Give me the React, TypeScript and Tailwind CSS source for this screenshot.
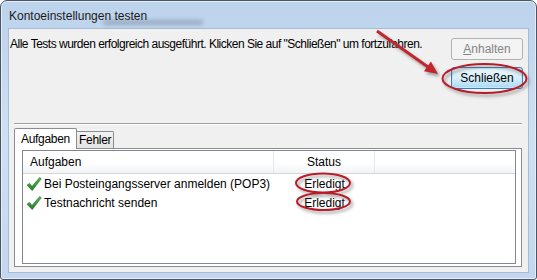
import React from "react";

const CheckIcon = () => (
  <svg width="16" height="16" viewBox="0 0 16 16" className="shrink-0">
    <defs>
      <linearGradient id="chk" x1="0" y1="0" x2="0" y2="1">
        <stop offset="0" stopColor="#5cc15c" />
        <stop offset="1" stopColor="#1f7d1f" />
      </linearGradient>
    </defs>
    <path
      d="M1 9.2 L3.6 7.4 L6 10.6 L13.6 1.6 L15.2 2.8 L6.2 14.6 Z"
      fill="url(#chk)"
      stroke="#17611a"
      strokeWidth="0.6"
      strokeLinejoin="round"
    />
  </svg>
);

const Annotations = () => (
  <svg className="absolute inset-0 pointer-events-none" width="537" height="280">
    <defs>
      <filter id="shadow" x="-20%" y="-20%" width="140%" height="160%">
        <feDropShadow dx="2" dy="2.5" stdDeviation="1.5" floodColor="#555" floodOpacity="0.55" />
      </filter>
    </defs>
    <g filter="url(#shadow)" fill="none" stroke="#b81f2a" strokeWidth="2">
      <ellipse cx="484.5" cy="78.5" rx="42" ry="14.5" />
      <ellipse cx="323" cy="183" rx="27" ry="9.5" />
      <ellipse cx="323.5" cy="201.5" rx="26.5" ry="8.5" />
    </g>
    <g filter="url(#shadow)">
      <line x1="377" y1="31" x2="428" y2="67" stroke="#c1272d" strokeWidth="3" />
      <polygon points="438,74 423.9,71.3 430.9,61.5" fill="#c1272d" />
    </g>
  </svg>
);

const rows = [
  { task: "Bei Posteingangsserver anmelden (POP3)", status: "Erledigt" },
  { task: "Testnachricht senden", status: "Erledigt" },
];

export default function App() {
  return (
    <div className="relative w-[537px] h-[280px] bg-white font-['Liberation_Sans',Arial,sans-serif] text-[12px] leading-[16px] text-black">
      <div className="h-full flex flex-col rounded-t-[7px] rounded-b-[3px] border border-[#4b5563] bg-gradient-to-b from-[#bcd3ec] via-[#cfe0f3] to-[#c2d7ee] px-[7px] pb-[6px] shadow-[inset_0_0_0_1px_#e3eefa]">
        {/* title bar */}
        <div className="relative h-[27px] flex items-center pl-[1px] pt-[3px]">
          <div className="absolute left-[95px] top-[19px] h-[5px] w-[100px] rounded-full bg-[#5d6b7d]/40 blur-[2px]" />
          <span className="relative text-[#1b1b1b]">Kontoeinstellungen testen</span>
        </div>

        {/* client area */}
        <div className="flex-1 flex flex-col bg-[#f0f0f0] border border-[#a6bcd6]">
          <div className="h-[94px] flex">
            <p className="pl-[1px] pt-[7px] whitespace-nowrap tracking-[-0.5px]">
              Alle Tests wurden erfolgreich ausgeführt. Klicken Sie auf "Schließen" um fortzufahren.
            </p>
            <div className="ml-auto mr-[5px] pt-[9px] flex flex-col gap-[7px]">
              <button className="w-[72px] h-[22px] rounded-[3px] border border-[#adb2b5] bg-[#f4f4f4] text-[#838383]">
                <span className="underline">A</span>nhalten
              </button>
              <button className="w-[72px] h-[22px] rounded-[3px] border border-[#3c7fb1] bg-gradient-to-b from-[#eaf6fd] via-[#d9f0fc] to-[#a7d9f5] shadow-[inset_0_0_0_1px_#c6e8fb]">
                Schließen
              </button>
            </div>
          </div>

          <div className="ml-[5px] mr-[6px] border-t border-[#a0a0a0] border-b border-b-white" />

          {/* tabs */}
          <div className="flex-1 flex flex-col pl-[5px] pr-[6px] pt-[3px] pb-[5px]">
            <div className="flex items-end">
              <div className="relative z-10 -mb-px w-[63px] h-[21px] pl-[6px] pt-[2px] border border-b-0 border-[#898c95] rounded-t-[2px] bg-white whitespace-nowrap tracking-[-0.3px]">
                Aufgaben
              </div>
              <div className="w-[37px] h-[17px] pl-[2px] border border-l-0 border-b-0 border-[#898c95] rounded-tr-[2px] bg-gradient-to-b from-[#f2f2f2] to-[#e3e3e3] whitespace-nowrap tracking-[-0.3px]">
                Fehler
              </div>
            </div>
            <div className="flex-1 flex flex-col border border-[#898c95] bg-white pl-[7px] pr-[5px] pt-[1px] pb-[2px]">
              <div className="flex-1 flex flex-col border border-[#828790] bg-white">
                <div className="h-[23px] flex border-b border-[#d5d5d5] bg-gradient-to-b from-white via-white to-[#f3f4f6]">
                  <div className="w-[251px] border-r border-[#e3e8ef] pl-[7px] flex items-center">Aufgaben</div>
                  <div className="w-[101px] border-r border-[#e3e8ef] flex items-center justify-center">Status</div>
                  <div className="flex-1" />
                </div>
                {rows.map((r) => (
                  <div key={r.task} className="h-[19px] flex items-center">
                    <div className="w-[251px] pl-[3px] flex items-center gap-[2px]">
                      <CheckIcon />
                      <span>{r.task}</span>
                    </div>
                    <div className="w-[101px] text-center">{r.status}</div>
                  </div>
                ))}
              </div>
            </div>
          </div>
        </div>
      </div>
      <Annotations />
    </div>
  );
}
